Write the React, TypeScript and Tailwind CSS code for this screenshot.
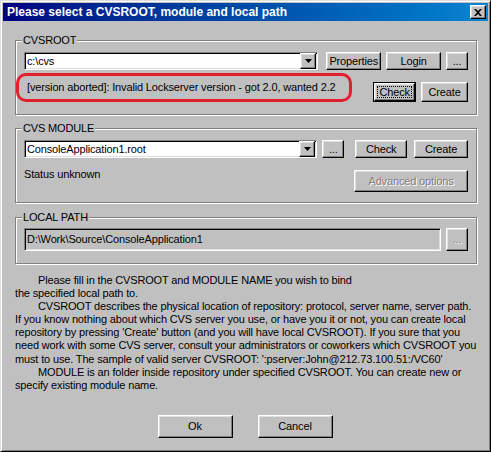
import type { ReactNode } from "react";

// classic 3D bevels
const raised =
  "border border-t-white border-l-white border-r-black border-b-black shadow-[inset_-1px_-1px_0_#808080,inset_1px_1px_0_#dfdfdf]";
const sunken =
  "border border-t-[#808080] border-l-[#808080] border-r-white border-b-white shadow-[inset_1px_1px_0_#000,inset_-1px_-1px_0_#dfdfdf]";
const grayText = "text-[#808080] [text-shadow:1px_1px_0_#fff]";

function Btn({
  children,
  className = "",
  disabled,
  focused,
}: {
  children: ReactNode;
  className?: string;
  disabled?: boolean;
  focused?: boolean;
}) {
  if (focused) {
    return (
      <div className={`border border-black ${className}`}>
        <div className={`${raised} h-full flex p-[2px]`}>
          <div className="flex-1 border border-dotted border-black flex items-center justify-center">{children}</div>
        </div>
      </div>
    );
  }
  return (
    <div className={`${raised} flex items-center justify-center ${disabled ? grayText : ""} ${className}`}>
      {children}
    </div>
  );
}

function Combo({ value, className = "" }: { value: string; className?: string }) {
  return (
    <div className={`${sunken} bg-white flex items-center ${className}`}>
      <span className="flex-1 pl-[2px] truncate">{value}</span>
      <div className={`${raised} w-[16px] h-full mr-[1px] flex items-center justify-center bg-[#c0c0c0]`}>
        <svg width="7" height="4" viewBox="0 0 7 4">
          <path d="M0 0h7L3.5 4z" fill="#000" />
        </svg>
      </div>
    </div>
  );
}

function GroupBox({ title, className = "", children }: { title: string; className?: string; children: ReactNode }) {
  return (
    <div className={`relative border border-[#808080] shadow-[1px_1px_0_#fff,inset_1px_1px_0_#fff] ${className}`}>
      <span className="absolute left-[6px] top-[-7px] bg-[#c0c0c0] px-[1px] leading-[13px]">{title}</span>
      {children}
    </div>
  );
}

export default function App() {
  return (
    <div className="w-[491px] h-[452px] bg-[#c0c0c0] font-['Liberation_Sans',Arial,sans-serif] text-[11px] tracking-[-0.15px] text-black border border-t-[#dfdfdf] border-l-[#dfdfdf] border-r-black border-b-black shadow-[inset_1px_1px_0_#fff,inset_-1px_-1px_0_#808080] p-[2px] flex flex-col">
      {/* title bar */}
      <div className="h-[18px] bg-gradient-to-r from-[#000080] to-[#1084d0] flex items-center pl-[4px]">
        <span className="flex-1 text-white font-bold text-[12px] tracking-normal">
          Please select a CVSROOT, module and local path
        </span>
        <div className={`${raised} w-[16px] h-[14px] mr-[2px] bg-[#c0c0c0] flex items-center justify-center`}>
          <svg width="8" height="7" viewBox="0 0 8 7">
            <path d="M0 0h2l2 2 2-2h2L5 3.5 8 7H6L4 5 2 7H0l3-3.5z" fill="#000" />
          </svg>
        </div>
      </div>

      <div className="flex-1 pl-[12px] pr-[11px] flex flex-col">
        <GroupBox title="CVSROOT" className="mt-[19px] pt-[11px] pb-[12px] px-[8px]">
          <div className="flex items-center h-[18px]">
            <Combo value="c:\cvs" className="w-[295px] h-[18px]" />
            <Btn className="w-[55px] h-[18px] ml-[8px]">Properties</Btn>
            <Btn className="w-[55px] h-[18px] ml-[5px]">Login</Btn>
            <Btn className="w-[22px] h-[18px] ml-[5px]">...</Btn>
          </div>
          <div className="flex items-end mt-[3px]">
            <div className="-ml-[8px] w-[337px] h-[29px] border-[3px] border-[#e31e2d] rounded-[10px] flex items-center pl-[8px]">
              [version aborted]: Invalid Lockserver version - got 2.0, wanted 2.2
            </div>
            <Btn focused className="w-[43px] h-[20px] ml-[21px]">Check</Btn>
            <Btn className="w-[47px] h-[20px] ml-[5px]">Create</Btn>
          </div>
        </GroupBox>

        <GroupBox title="CVS MODULE" className="mt-[13px] pt-[11px] pb-[10px] px-[8px]">
          <div className="flex items-center h-[18px]">
            <Combo value="ConsoleApplication1.root" className="w-[294px] h-[18px]" />
            <Btn className="w-[22px] h-[18px] ml-[5px]">...</Btn>
            <Btn className="w-[52px] h-[18px] ml-[11px]">Check</Btn>
            <Btn className="w-[54px] h-[18px] ml-[7px]">Create</Btn>
          </div>
          <div className="flex items-start mt-[10px]">
            <span className="flex-1 leading-[13px]">Status unknown</span>
            <Btn disabled className="w-[114px] h-[22px] mt-[2px]">Advanced options</Btn>
          </div>
        </GroupBox>

        <GroupBox title="LOCAL PATH" className="mt-[14px] pt-[10px] pb-[12px] px-[8px]">
          <div className="flex items-center">
            <div className={`${sunken} w-[417px] h-[23px] flex items-center pl-[2px]`}>
              D:\Work\Source\ConsoleApplication1
            </div>
            <Btn disabled className="w-[22px] h-[23px] ml-[5px]">...</Btn>
          </div>
        </GroupBox>

        <div className="mt-[10px] leading-[13.1px] whitespace-nowrap">
          <div className="pl-[23px]">Please fill in the CVSROOT and MODULE NAME you wish to bind</div>
          <div>the specified local path to.</div>
          <div className="pl-[23px]">
            CVSROOT describes the physical location of repository: protocol, server name, server path.
          </div>
          <div>If you know nothing about which CVS server you use, or have you it or not, you can create local</div>
          <div>repository by pressing 'Create' button (and you will have local CVSROOT). If you sure that you</div>
          <div>need work with some CVS server, consult your administrators or coworkers which CVSROOT you</div>
          <div>must to use. The sample of valid server CVSROOT: ':pserver:John@212.73.100.51:/VC60'</div>
          <div className="pl-[23px]">
            MODULE is an folder inside repository under specified CVSROOT. You can create new or
          </div>
          <div>specify existing module name.</div>
        </div>

        <div className="mt-[23px] flex justify-center gap-[25px] -ml-[2px]">
          <Btn className="w-[75px] h-[23px]">Ok</Btn>
          <Btn className="w-[75px] h-[23px]">Cancel</Btn>
        </div>
      </div>
    </div>
  );
}
